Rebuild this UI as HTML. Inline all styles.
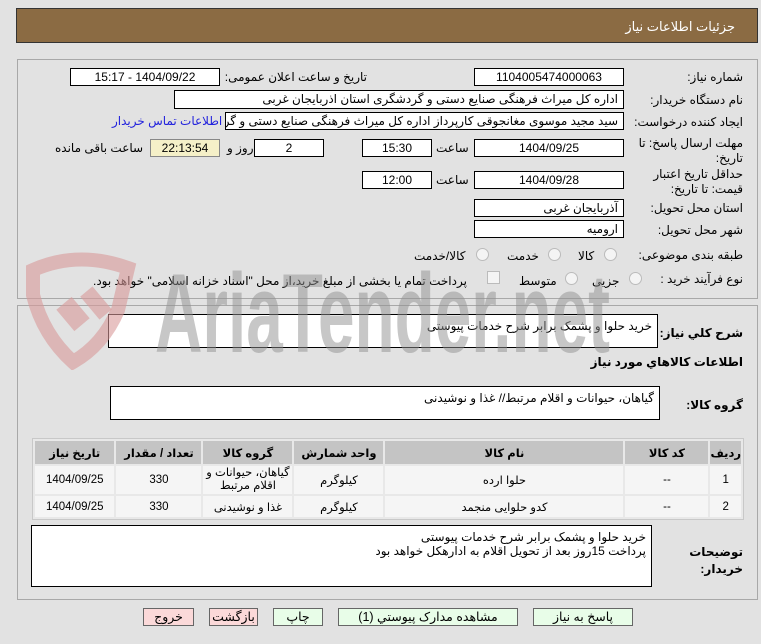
<!DOCTYPE html>
<html><head><meta charset="utf-8"><style>
body{margin:0;width:761px;height:644px;background:#e2e2e2;font-family:"Liberation Sans","DejaVu Sans",sans-serif;font-size:12px;color:#000;position:relative;overflow:hidden}
.a{position:absolute}
.hdr{left:16px;top:8px;width:742px;height:35px;background:#8b6b43;border:1px solid #333;box-sizing:border-box}
.hdr span{position:absolute;right:22px;top:10px;color:#fff;font-size:13px}
.pan{border:1px solid #a8a8a8;box-sizing:border-box;z-index:0}
.in{position:absolute;background:#fff;border:1px solid #000;box-sizing:border-box;direction:rtl;padding:0 5px;line-height:16px;white-space:nowrap;overflow:hidden;z-index:3}
.c{text-align:center}
.l{position:absolute;direction:rtl;white-space:nowrap;z-index:3}
.rad{position:absolute;width:11px;height:11px;border:1px solid #bbb;border-radius:50%;background:#f4f4f4;z-index:3}
table{border-collapse:separate;border-spacing:2px;background:#e8e8e8;border:1px solid #c8c8c8;z-index:3}
td{text-align:center;font-size:11.5px;padding:0}
th{background:#c4c4c4;font-size:11.5px;height:23px;padding:0}
tr.r td{background:#f5f5f5}
.btn{position:absolute;top:608px;height:18px;border:1px solid #666;box-sizing:border-box;text-align:center;line-height:16px;font-size:12.5px;background:#e8fde8}
.pk{background:#fbd9d9}
</style></head><body>
<div class="a hdr"><span>جزئیات اطلاعات نیاز</span></div>
<div class="a pan" style="left:17px;top:59px;width:741px;height:240px"></div>
<div class="a pan" style="left:17px;top:305px;width:741px;height:295px"></div>

<!-- watermark -->
<svg class="a" style="left:18px;top:250px;z-index:5" width="130" height="120" viewBox="0 0 130 120"><g fill-opacity="0.6" stroke-opacity="0.6"><path d="M15 20 Q60 0 110 18 L100 60 Q85 95 55 112 Q25 85 15 45Z" fill="none" stroke="#d99a9a" stroke-width="14"/><rect x="45" y="50" width="20" height="28" fill="#d99a9a" transform="rotate(-40 55 64)"/><rect x="70" y="38" width="16" height="30" fill="#d99a9a" transform="rotate(-40 78 53)"/></g></svg>
<svg class="a" style="left:150px;top:250px;z-index:5" width="470" height="110"><text x="5" y="102" font-family="Liberation Sans" font-weight="bold" font-size="112" fill="#8f8f8f" fill-opacity="0.5" textLength="455" lengthAdjust="spacingAndGlyphs">AriaTender.net</text></svg>

<div class="l" style="right:18px;top:70px">شماره نیاز:</div>
<div class="in c" style="left:474px;top:68px;width:150px;height:18px">1104005474000063</div>
<div class="l" style="right:394px;top:70px">تاریخ و ساعت اعلان عمومی:</div>
<div class="in c" style="left:70px;top:68px;width:150px;height:18px">1404/09/22 - 15:17</div>

<div class="l" style="right:18px;top:93px">نام دستگاه خریدار:</div>
<div class="in" style="left:174px;top:90px;width:450px;height:19px">اداره کل میراث فرهنگی  صنایع دستی و گردشگری استان اذربایجان غربی</div>

<div class="l" style="right:18px;top:115px">ایجاد کننده درخواست:</div>
<div class="in" style="left:225px;top:112px;width:399px;height:18px">سید مجید موسوی مغانجوقی کارپرداز اداره کل میراث فرهنگی  صنایع دستی و گردشگری</div>
<div class="l" style="left:112px;top:114px;color:#2222dd">اطلاعات تماس خریدار</div>

<div class="l" style="right:18px;top:136px;line-height:15px;text-align:right">مهلت ارسال پاسخ: تا<br>تاریخ:</div>
<div class="in c" style="left:474px;top:139px;width:150px;height:18px">1404/09/25</div>
<div class="l" style="left:436px;top:141px">ساعت</div>
<div class="in c" style="left:362px;top:139px;width:70px;height:18px">15:30</div>
<div class="in c" style="left:254px;top:139px;width:70px;height:18px">2</div>
<div class="l" style="left:227px;top:141px">روز و</div>
<div class="in c" style="left:150px;top:139px;width:70px;height:18px;background:#f5f0c8;border-color:#888">22:13:54</div>
<div class="l" style="left:55px;top:141px">ساعت باقی مانده</div>

<div class="l" style="right:18px;top:167px;line-height:15px;text-align:right">حداقل تاریخ اعتبار<br>قیمت: تا تاریخ:</div>
<div class="in c" style="left:474px;top:171px;width:150px;height:18px">1404/09/28</div>
<div class="l" style="left:436px;top:173px">ساعت</div>
<div class="in c" style="left:362px;top:171px;width:70px;height:18px">12:00</div>

<div class="l" style="right:18px;top:201px">استان محل تحویل:</div>
<div class="in" style="left:474px;top:199px;width:150px;height:18px">آذربایجان غربی</div>
<div class="l" style="right:18px;top:223px">شهر محل تحویل:</div>
<div class="in" style="left:474px;top:220px;width:150px;height:18px">ارومیه</div>

<div class="l" style="right:18px;top:248px">طبقه بندی موضوعی:</div>
<div class="rad" style="left:604px;top:248px"></div><div class="l" style="left:578px;top:249px">کالا</div>
<div class="rad" style="left:548px;top:248px"></div><div class="l" style="left:507px;top:249px">خدمت</div>
<div class="rad" style="left:476px;top:248px"></div><div class="l" style="left:414px;top:249px">کالا/خدمت</div>

<div class="l" style="right:18px;top:272px">نوع فرآیند خرید :</div>
<div class="rad" style="left:629px;top:272px"></div><div class="l" style="left:592px;top:274px">جزیی</div>
<div class="rad" style="left:565px;top:272px"></div><div class="l" style="left:519px;top:274px">متوسط</div>
<div class="a" style="left:487px;top:271px;width:11px;height:11px;border:1px solid #bbb;background:#f4f4f4;z-index:3"></div>
<div class="l" style="left:93px;top:274px">پرداخت تمام یا بخشی از مبلغ خرید،از محل "اسناد خزانه اسلامی" خواهد بود.</div>

<div class="l" style="right:18px;top:326px;font-weight:bold">شرح کلي نیاز:</div>
<div class="in" style="left:108px;top:314px;width:550px;height:34px;line-height:22px">خرید حلوا و پشمک برابر شرح خدمات پیوستی</div>
<div class="l" style="right:18px;top:355px;font-weight:bold">اطلاعات کالاهاي مورد نیاز</div>
<div class="l" style="right:18px;top:398px;font-weight:bold">گروه کالا:</div>
<div class="in" style="left:110px;top:386px;width:550px;height:34px;line-height:22px">گیاهان، حیوانات و اقلام مرتبط// غذا و نوشیدنی</div>

<table class="a" style="left:32px;top:438px;width:712px;direction:rtl">
<tr><th style="width:28px">ردیف</th><th style="width:83px">کد کالا</th><th style="width:238px">نام کالا</th><th style="width:89px">واحد شمارش</th><th style="width:89px">گروه کالا</th><th style="width:85px">تعداد / مقدار</th><th>تاریخ نیاز</th></tr>
<tr class="r" style="height:28px"><td>1</td><td>--</td><td>حلوا ارده</td><td>کیلوگرم</td><td style="line-height:13px">گیاهان، حیوانات و اقلام مرتبط</td><td>330</td><td>1404/09/25</td></tr>
<tr class="r" style="height:21px"><td>2</td><td>--</td><td>کدو حلوایی منجمد</td><td>کیلوگرم</td><td>غذا و نوشیدنی</td><td>330</td><td>1404/09/25</td></tr>
</table>

<div class="l" style="right:18px;top:544px;font-weight:bold;line-height:17px;text-align:right">توضیحات<br>خریدار:</div>
<div class="in" style="left:31px;top:525px;width:621px;height:62px;line-height:14px;padding-top:4px">خرید حلوا و پشمک برابر شرح خدمات پیوستی<br>پرداخت 15روز بعد از تحویل اقلام به ادارهکل خواهد بود</div>

<div class="btn pk" style="left:143px;width:51px">خروج</div>
<div class="btn pk" style="left:209px;width:49px">بازگشت</div>
<div class="btn" style="left:273px;width:50px">چاپ</div>
<div class="btn" style="left:338px;width:180px">مشاهده مدارک پیوستي (1)</div>
<div class="btn" style="left:533px;width:100px">پاسخ به نیاز</div>
</body></html>
